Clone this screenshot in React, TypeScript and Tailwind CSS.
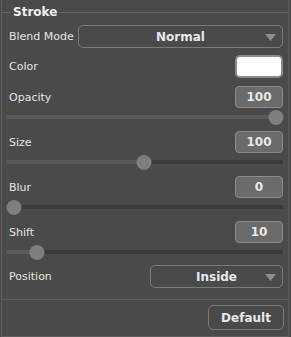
import React from 'react'

const font = { fontFamily: '"DejaVu Sans", Verdana, sans-serif' }

function ValueBox({ value }: { value: string }) {
  return (
    <div className="shrink-0 w-[48px] h-[22px] rounded-[4px] border border-[#8a8a8a] bg-[#6b6b6b] flex items-center justify-center text-[12px] font-bold text-[#e8e8e8]">
      {value}
    </div>
  )
}

function Slider({ pos }: { pos: number }) {
  return (
    <div className="relative h-[14px] mx-[5px] flex items-center">
      <div className="w-full h-[4px] bg-[#3b3b3b] flex">
        <div className="h-full bg-[#5a5a5a]" style={{ width: `${pos}%` }} />
      </div>
      <div
        className="absolute w-[15px] h-[15px] rounded-full bg-[#7f7f7f] -translate-x-1/2"
        style={{ left: `${pos}%` }}
      />
    </div>
  )
}

function Arrow() {
  return (
    <svg width="11" height="7" viewBox="0 0 11 7" className="absolute right-[6px] top-[8px]">
      <polygon points="0,0 11,0 5.5,7" fill="#8c8c8c" />
    </svg>
  )
}

function SliderRow({ label, value, pos }: { label: string; value: string; pos: number }) {
  return (
    <div className="flex flex-col">
      <div className="flex items-center justify-between pl-[7px] pr-[5px] h-[22px]">
        <span className="whitespace-nowrap">{label}</span>
        <ValueBox value={value} />
      </div>
      <div className="mt-[2px]">
        <Slider pos={pos} />
      </div>
    </div>
  )
}

export default function App() {
  return (
    <div
      className="w-[291px] h-[337px] bg-[#4a4a4a] text-[11px] leading-none text-[#e4e4e4] flex flex-col"
      style={font}
    >
      <div className="flex flex-col flex-1 border-x border-b border-[#5e5e5e] ml-[1px] mr-[2px]">
        {/* Legend */}
        <div className="flex items-center h-[24px]">
          <div className="w-[9px] h-px bg-[#646464]" />
          <span className="px-[2px] text-[12px] font-bold text-[#f0f0f0]">Stroke</span>
          <div className="flex-1 h-px bg-[#646464]" />
        </div>

        {/* Blend Mode */}
        <div className="flex items-center justify-between pl-[7px] pr-[5px] mt-[1px]">
          <span className="whitespace-nowrap">Blend Mode</span>
          <div className="relative shrink-0 w-[205px] h-[23px] rounded-[5px] border border-[#7a7a7a] flex items-center justify-center text-[12px] font-bold text-[#e8e8e8]">
            Normal
            <Arrow />
          </div>
        </div>

        {/* Color */}
        <div className="flex items-center justify-between pl-[7px] pr-[5px] mt-[7px]">
          <span>Color</span>
          <div className="shrink-0 w-[48px] h-[23px] rounded-[5px] border-2 border-[#8c8c8c] bg-white" />
        </div>

        <div className="flex flex-col gap-[7px] mt-[8px]">
          <SliderRow label="Opacity" value="100" pos={97.5} />
          <SliderRow label="Size" value="100" pos={49.5} />
          <SliderRow label="Blur" value="0" pos={2.5} />
          <SliderRow label="Shift" value="10" pos={11} />
        </div>

        {/* Position */}
        <div className="flex items-center justify-between pl-[7px] pr-[5px] mt-[6px]">
          <span>Position</span>
          <div className="relative shrink-0 w-[133px] h-[23px] rounded-[5px] border border-[#7a7a7a] flex items-center justify-center text-[12px] font-bold text-[#e8e8e8]">
            Inside
            <Arrow />
          </div>
        </div>

        <div className="h-px bg-[#5e5e5e] mt-[11px]" />

        <div className="flex justify-end pr-[4px] mt-[5px]">
          <div className="w-[76px] h-[25px] rounded-[5px] border border-[#7a7a7a] flex items-center justify-center text-[12px] font-bold text-[#e8e8e8]">
            Default
          </div>
        </div>
      </div>
    </div>
  )
}
